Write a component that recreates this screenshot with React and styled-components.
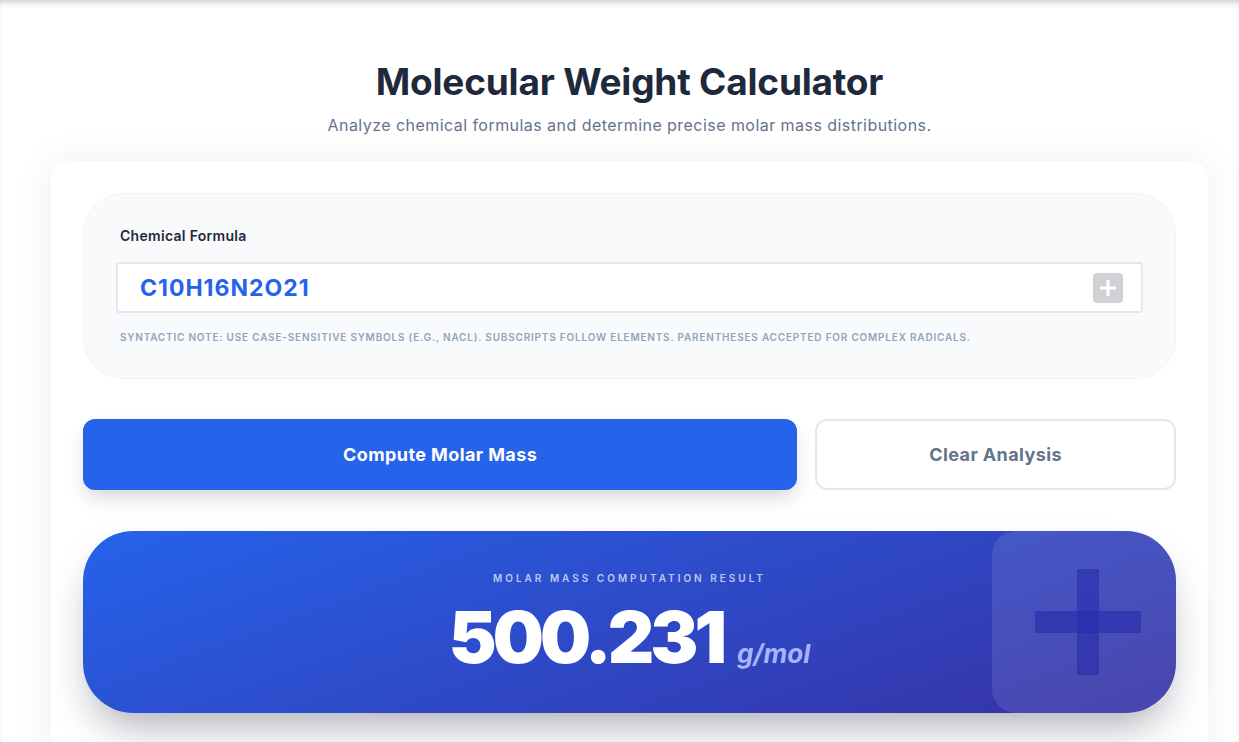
import styled, { createGlobalStyle } from "styled-components";

const GlobalStyle = createGlobalStyle`
  html, body {
    margin: 0;
    padding: 0;
    background: #ffffff;
  }
  body {
    font-family: "Inter", "Noto Sans", sans-serif;
    overflow: hidden;
  }
  * { box-sizing: border-box; }
`;

const Page = styled.div`
  min-height: 100vh;
  padding: 60px 31px 0 51px;
  box-shadow: inset 0 5px 6px -3px rgba(0, 0, 0, 0.22);
`;

const Header = styled.header`
  display: flex;
  flex-direction: column;
  align-items: center;
  gap: 9px;
`;

const Title = styled.h1`
  margin: 0;
  font-size: 37px;
  line-height: 44px;
  font-weight: 700;
  color: #1e293b;
  letter-spacing: -0.2px;
`;

const Subtitle = styled.p`
  margin: 0;
  font-size: 16px;
  line-height: 24px;
  color: #64748b;
  letter-spacing: 0.45px;
`;

const Card = styled.main`
  margin-top: 24px;
  background: #ffffff;
  border-radius: 16px 16px 0 0;
  box-shadow: 0 0 40px rgba(15, 23, 42, 0.07);
  padding: 32px 32px 40px;
  display: flex;
  flex-direction: column;
  gap: 40px;
`;

const Panel = styled.section`
  background: #f8fafc;
  border: 1px solid #f1f5f9;
  border-radius: 40px;
  padding: 32px 32px 34px;
  display: flex;
  flex-direction: column;
`;

const Label = styled.label`
  font-size: 14px;
  line-height: 20px;
  font-weight: 600;
  letter-spacing: 0.3px;
  color: #1e293b;
  margin: 0 0 16px 4px;
`;

const InputShell = styled.div`
  display: flex;
  align-items: center;
  height: 51px;
  background: #ffffff;
  border: 2px solid #e2e8f0;
  border-radius: 3px;
  padding: 0 18px 0 22px;
`;

const FormulaInput = styled.input`
  flex: 1;
  min-width: 0;
  border: none;
  outline: none;
  background: transparent;
  font-family: "Inter", "Noto Sans", sans-serif;
  font-size: 23px;
  font-weight: 700;
  letter-spacing: 1px;
  color: #2563eb;
  padding: 0;
`;

const IconButton = styled.span`
  width: 30px;
  height: 30px;
  border-radius: 4px;
  background: #d1d2d6;
  display: flex;
  align-items: center;
  justify-content: center;
`;

const Note = styled.p`
  margin: 17px 0 0 4px;
  font-size: 10px;
  line-height: 14px;
  font-weight: 600;
  letter-spacing: 0.8px;
  text-transform: uppercase;
  color: #94a3b8;
`;

const Actions = styled.div`
  display: grid;
  grid-template-columns: 2fr 1.01fr;
  gap: 18px;
`;

const Button = styled.button`
  height: 71px;
  border-radius: 12px;
  font-family: "Inter", "Noto Sans", sans-serif;
  font-size: 18px;
  font-weight: 700;
  letter-spacing: 0.4px;
  cursor: pointer;
  border: 2px solid ${({ $primary }) => ($primary ? "#2563eb" : "#e2e8f0")};
  background: ${({ $primary }) => ($primary ? "#2563eb" : "#ffffff")};
  color: ${({ $primary }) => ($primary ? "#ffffff" : "#64748b")};
  box-shadow: ${({ $primary }) =>
    $primary ? "0 10px 20px -4px rgba(15, 23, 42, 0.2)" : "none"};
`;

const Result = styled.section`
  position: relative;
  overflow: hidden;
  height: 182px;
  margin-top: 1px;
  border-radius: 50px;
  background: linear-gradient(160deg, #2563eb 0%, #3730a3 100%);
  box-shadow: 0 22px 40px -10px rgba(15, 23, 42, 0.35);
  display: flex;
  flex-direction: column;
  align-items: center;
  padding-top: 40px;
`;

const ResultLabel = styled.div`
  font-size: 10px;
  line-height: 14px;
  font-weight: 600;
  letter-spacing: 3px;
  text-transform: uppercase;
  color: rgba(255, 255, 255, 0.7);
`;

const ValueRow = styled.div`
  margin-top: 16px;
  display: flex;
  align-items: baseline;
  gap: 14px;
  position: relative;
  z-index: 1;
`;

const Value = styled.span`
  font-size: 72px;
  line-height: 72px;
  font-weight: 900;
  letter-spacing: -4px;
  color: #ffffff;
`;

const Unit = styled.span`
  font-size: 26px;
  font-weight: 700;
  font-style: italic;
  color: #a5b4fc;
`;

const Decor = styled.div`
  position: absolute;
  top: 0;
  right: 0;
  bottom: 0;
  width: 184px;
  background: rgba(255, 255, 255, 0.1);
  border-radius: 24px 0 0 24px;
  display: flex;
  align-items: center;
  padding-left: 43px;
`;

const PlusMark = ({ size, color }) => (
  <svg width={size} height={size} viewBox="0 0 106 106">
    <rect x="42" y="0" width="22" height="106" fill={color} />
    <rect x="0" y="42" width="106" height="22" fill={color} />
  </svg>
);

export default function App() {
  return (
    <Page>
      <GlobalStyle />
      <Header>
        <Title>Molecular Weight Calculator</Title>
        <Subtitle>
          Analyze chemical formulas and determine precise molar mass distributions.
        </Subtitle>
      </Header>
      <Card>
        <Panel>
          <Label htmlFor="formula">Chemical Formula</Label>
          <InputShell>
            <FormulaInput id="formula" defaultValue="C10H16N2O21" readOnly />
            <IconButton>
              <svg width="18" height="18" viewBox="0 0 18 18">
                <rect x="7.5" y="1" width="3" height="16" fill="#ffffff" />
                <rect x="1" y="7.5" width="16" height="3" fill="#ffffff" />
              </svg>
            </IconButton>
          </InputShell>
          <Note>
            Syntactic note: use case-sensitive symbols (e.g., NaCl). Subscripts follow
            elements. Parentheses accepted for complex radicals.
          </Note>
        </Panel>
        <Actions>
          <Button $primary>Compute Molar Mass</Button>
          <Button>Clear Analysis</Button>
        </Actions>
        <Result>
          <Decor>
            <PlusMark size={106} color="rgba(38, 44, 170, 0.6)" />
          </Decor>
          <ResultLabel>Molar Mass Computation Result</ResultLabel>
          <ValueRow>
            <Value>500.231</Value>
            <Unit>g/mol</Unit>
          </ValueRow>
        </Result>
      </Card>
    </Page>
  );
}
